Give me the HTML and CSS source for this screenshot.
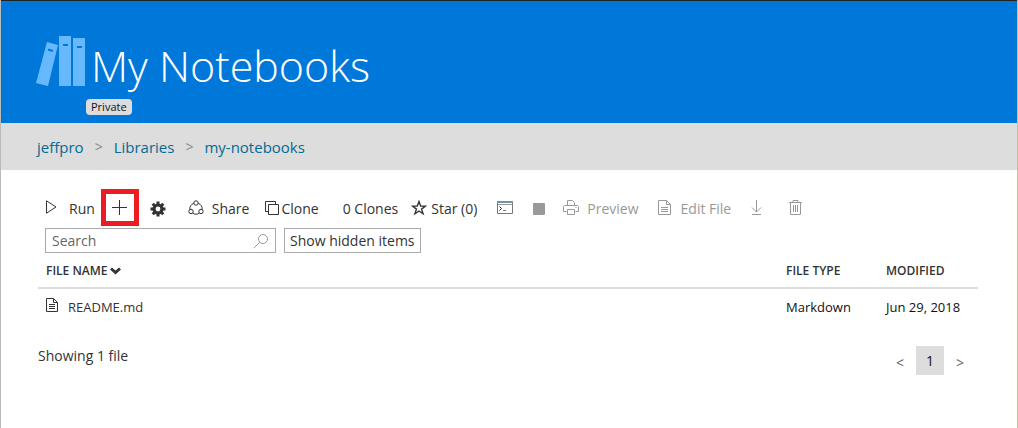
FILE: index.html
```html
<!DOCTYPE html>
<html lang="en">
<head>
<meta charset="utf-8">
<title>My Notebooks</title>
<link rel="stylesheet" href="styles.css">
</head>
<body>
<header class="hero">
  <svg class="books" width="50" height="51" viewBox="0 0 50 51" aria-hidden="true">
    <path fill="#66b9ff" d="M11 6l11 3-10 41-12-3zM23 0h12v50H23zM37 2h12v48H37z"/>
    <path stroke="#0078d9" stroke-width="2" d="M12 13.500l5 1.500M27 9h5M41 11h5"/>
  </svg>
  <div class="hero-text">
    <h1>My Notebooks</h1>
    <span class="badge">Private</span>
  </div>
</header>
<nav class="crumbs" aria-label="Breadcrumb">
  <a href="#">jeffpro</a><span class="sep">&gt;</span><a href="#">Libraries</a><span class="sep">&gt;</span><a href="#">my-notebooks</a>
</nav>
<main>
  <div class="toolbar">
    <button class="run"><svg width="12" height="17" viewBox="0 0 12 17"><path d="M1.500 .8v12.400l9.500-6.200z"/></svg>Run</button>
    <button class="add" aria-label="New"><svg width="16" height="16" viewBox="0 0 16 16"><path d="M7.500 0v15M0 7.500h15"/></svg></button>
    <button class="gear" aria-label="Settings"><svg width="16" height="16" viewBox="0 0 16 16"><circle cx="8" cy="8" r="4" stroke-width="3.200"/><path stroke-width="3" d="M8 .5v3M8 12.500v3M.5 8h3M12.500 8h3M2.700 2.700l2 2M11.300 11.300l2 2M2.700 13.300l2-2M11.300 4.700l2-2"/></svg></button>
    <button class="share"><svg width="16" height="18" viewBox="0 0 16 18"><circle cx="8" cy="3" r="2.200"/><circle cx="3" cy="11.500" r="2.200"/><circle cx="13" cy="11.500" r="2.200"/><path d="M5.800 3.300C3 4.300 1.600 6.500 1.900 9.500M10.200 3.300c2.800 1 4.200 3.200 3.900 6.200M4.800 13c2 1.700 4.400 1.700 6.400 0"/></svg>Share</button>
    <button class="clone"><svg width="15" height="15" viewBox="0 0 15 15"><path d="M3.500 10.500h-3v-10h10v3M3.500 3.500h10v10h-10z"/></svg>Clone</button>
    <span class="count">0 Clones</span>
    <button class="star"><svg width="16" height="18" viewBox="0 0 16 18"><path stroke-width="1.400" d="M8 1.500l1.700 4.600h4.800l-3.900 3 1.500 4.700L8 11l-4.100 2.800 1.500-4.700-3.900-3h4.800z"/></svg>Star (0)</button>
    <button class="term" aria-label="Terminal"><svg width="16" height="17" viewBox="0 0 16 17"><path stroke="#777" d="M.5 1.500h15v12H.5z"/><path stroke="#7393a8" stroke-width="2" d="M0 2h16"/><path stroke="#999" d="M1 4.500h14"/><path stroke="#222" d="M2.500 6.500l2 2-2 2"/><path stroke="#777" d="M6 10.500h3"/></svg></button>
    <button class="stop" aria-label="Stop" disabled><svg width="12" height="12" viewBox="0 0 12 12"><rect width="12" height="12" rx="1" fill="#999" stroke="none"/></svg></button>
    <button class="preview" disabled><svg width="16" height="18" viewBox="0 0 16 18"><path d="M4.500 5.500v-5h5l2 2v3M3.500 11.500h-3v-5l1-1h13l1 1v5h-3M4.500 9.500h7v5h-7zM12.500 7.500h1"/></svg>Preview</button>
    <button class="edit" disabled><svg width="14" height="18" viewBox="0 0 14 18"><path d="M.5.5h8l4 4v10H.5zM8.500.5v4h4M3 7.500h7M3 9.500h7M3 11.500h7"/></svg>Edit File</button>
    <button class="down" aria-label="Download" disabled><svg width="12" height="18" viewBox="0 0 12 18"><path d="M5.500 0v12M1 7.500L5.500 12 10 7.500M1 14.500h9"/></svg></button>
    <button class="trash" aria-label="Delete" disabled><svg width="13" height="18" viewBox="0 0 13 18"><path d="M0 2.500h13M4 2.500v-2h5v2M1.500 2.500v12h10v-12M4.500 5v7M6.500 5v7M8.500 5v7"/></svg></button>
  </div>
  <div class="filters">
    <label class="search"><input type="text" placeholder="Search" aria-label="Search"><svg width="16" height="16" viewBox="0 0 16 16"><circle cx="10" cy="6" r="4.500"/><path d="M6.800 9.200L.8 15.200"/></svg></label>
    <button class="hidden-items">Show hidden items</button>
  </div>
  <table>
    <thead><tr><th>FILE NAME<svg class="chev" width="11" height="8" viewBox="0 0 11 8"><path d="M1 1.500L5.500 5.500 10 1.500"/></svg></th><th class="type">FILE TYPE</th><th class="mod">MODIFIED</th></tr></thead>
    <tbody><tr><td><a class="file" href="#"><svg width="13" height="18" viewBox="0 0 13 18"><path d="M.5.5h7l4 4v9H.5zM7.500.5v4h4M3 6.500h6M3 8.500h6M3 10.500h6"/></svg>README.md</a></td><td>Markdown</td><td>Jun 29, 2018</td></tr></tbody>
  </table>
  <footer>
    <span>Showing 1 file</span>
    <nav class="pager" aria-label="Pages"><button aria-label="Previous">&lt;</button><button class="current">1</button><button aria-label="Next">&gt;</button></nav>
  </footer>
</main>
</body>
</html>
```
FILE: styles.css
```css
* { box-sizing: border-box; }
body {
  margin: 0;
  min-height: 100vh;
  border-left: 1px solid #bbb;
  border-right: 1px solid #c8cc60;
  background: #fff;
  color: #333;
  font: 14px/20px "Open Sans", "Noto Sans", sans-serif;
}
.hero {
  display: flex;
  gap: 5px;
  margin-left: -1px;
  padding: 35px 36px 8px;
  border-top: 1px solid #222;
  background: #0078d9;
}
.books { flex: none; stroke: none; }
.hero-text { display: flex; flex-direction: column; align-items: flex-start; }
h1 { margin: 0; padding-bottom: 4px; color: #fff; font-size: 43px; font-weight: 300; line-height: 59px; }
.badge {
  margin-left: -5px;
  padding: 0 5px;
  border-radius: 4px;
  background: #ddd;
  color: #111;
  font-size: 11px;
  line-height: 16px;
}
.crumbs {
  display: flex;
  align-items: center;
  gap: 11px;
  height: 47px;
  padding: 0 36px;
  background: #ddd;
  font-size: 15px;
}
a { color: #006b94; text-decoration: none; }
.sep { color: #888; font-size: 14px; }
main { padding: 19px 39px 0 37px; }
button { padding: 0; border: 0; background: none; color: inherit; font: inherit; white-space: nowrap; }
svg { flex: none; fill: none; stroke: currentColor; }
.toolbar { display: flex; align-items: center; height: 38px; padding: 1px 0 0 7px; }
.toolbar button { display: flex; align-items: center; }
.toolbar button:disabled { color: #999; }
.run { gap: 12px; }
.toolbar .add { justify-content: center; width: 38px; height: 37px; margin: -2px 0 0 6px; border: 5px solid #ed1c24; }
.gear { margin-left: 11px; }
.share { gap: 8px; margin-left: 22px; }
.clone { gap: 1px; margin-left: 16px; }
.count { margin-left: 24px; }
.star { gap: 4px; margin-left: 13px; }
.term { margin-left: 20px; }
.stop { margin-left: 20px; }
.preview { gap: 8px; margin-left: 18px; }
.edit { gap: 9px; margin-left: 19px; }
.down { margin-left: 20px; }
.trash { margin-left: 26px; }
.filters { display: flex; gap: 8px; padding: 1px 0 0 7px; }
.search { display: flex; align-items: center; width: 231px; height: 25px; padding: 0 6px; border: 1px solid #aaa; color: #999; }
.search input { flex: 1; min-width: 0; padding: 0; border: 0; outline: 0; background: none; color: #333; font: inherit; }
.search input::placeholder { color: #666; opacity: 1; }
.hidden-items { height: 25px; padding: 0 5px; border: 1px solid #aaa; }
table { width: 100%; border-collapse: collapse; table-layout: fixed; font-size: 13px; }
th { height: 35px; padding: 1px 8px 0; border-bottom: 2px solid #ddd; font-size: 12px; font-weight: 600; text-align: left; }
.type, .mod { width: 100px; }
.chev { margin-left: 3px; stroke-width: 3; }
td { height: 36px; padding: 0 8px; color: #111; }
.type, .mod, td + td { padding-right: 0; }
.file { display: flex; align-items: center; gap: 9px; color: #333; }
footer { display: flex; justify-content: space-between; padding-top: 22px; }
.pager { display: flex; align-items: center; gap: 12px; margin-right: 14px; color: #666; }
.pager button { padding-top: 4px; }
.pager .current { width: 28px; height: 29px; padding: 0; background: #ddd; color: #111; }
```
